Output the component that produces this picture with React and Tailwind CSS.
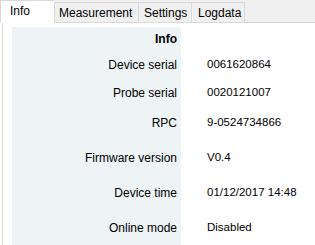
import React from "react";

const rows = [
  { label: "Device serial", value: "0061620864", h: "h-[28px]" },
  { label: "Probe serial", value: "0020121007", h: "h-[28px]" },
  { label: "RPC", value: "9-0524734866", h: "h-[32px]" },
  { label: "Firmware version", value: "V0.4", h: "h-[38px]" },
  { label: "Device time", value: "01/12/2017 14:48", h: "h-[32px]" },
  { label: "Online mode", value: "Disabled", h: "h-[38px]" },
];

export default function App() {
  return (
    <div className="w-[315px] h-[245px] overflow-hidden bg-white text-black font-['Liberation_Sans',Arial,sans-serif]">
      {/* tab strip */}
      <div className="flex items-end h-[23px] bg-[#f0f0f0] border-b border-[#d9d9d9] text-[12px]">
        <div className="w-[54px] h-[23px] -mb-px bg-white border-l border-t border-[#d9d9d9] pl-[9px] pt-[3px] leading-[15px]">
          Info
        </div>
        <div className="w-[85px] h-[20px] border-l border-t border-r border-[#d9d9d9] pl-[4px] pt-[3px] leading-[14px]">
          Measurement
        </div>
        <div className="w-[53px] h-[20px] border-t border-r border-[#d9d9d9] pl-[5px] pt-[3px] leading-[14px]">
          Settings
        </div>
        <div className="w-[53px] h-[20px] border-t border-r border-[#d9d9d9] pl-[6px] pt-[3px] leading-[14px]">
          Logdata
        </div>
      </div>

      {/* tab page */}
      <div className="ml-[2px] h-[222px] border-l border-[#d9d9d9] pl-[9px] pt-[4px]">
        <div className="flex h-[24px]">
          <div className="w-[169px] bg-[#eef3f6] flex items-center justify-end pr-[4px] font-bold text-[12px]">
            Info
          </div>
        </div>
        {rows.map((r) => (
          <div key={r.label} className={`flex ${r.h}`}>
            <div className="w-[169px] bg-[#eef3f6] flex items-center justify-end pr-[4px] text-[12px]">
              {r.label}
            </div>
            <div className="flex items-center pl-[26px] text-[11.5px]">{r.value}</div>
          </div>
        ))}
        <div className="w-[169px] h-[20px] bg-[#eef3f6]" />
      </div>
    </div>
  );
}
